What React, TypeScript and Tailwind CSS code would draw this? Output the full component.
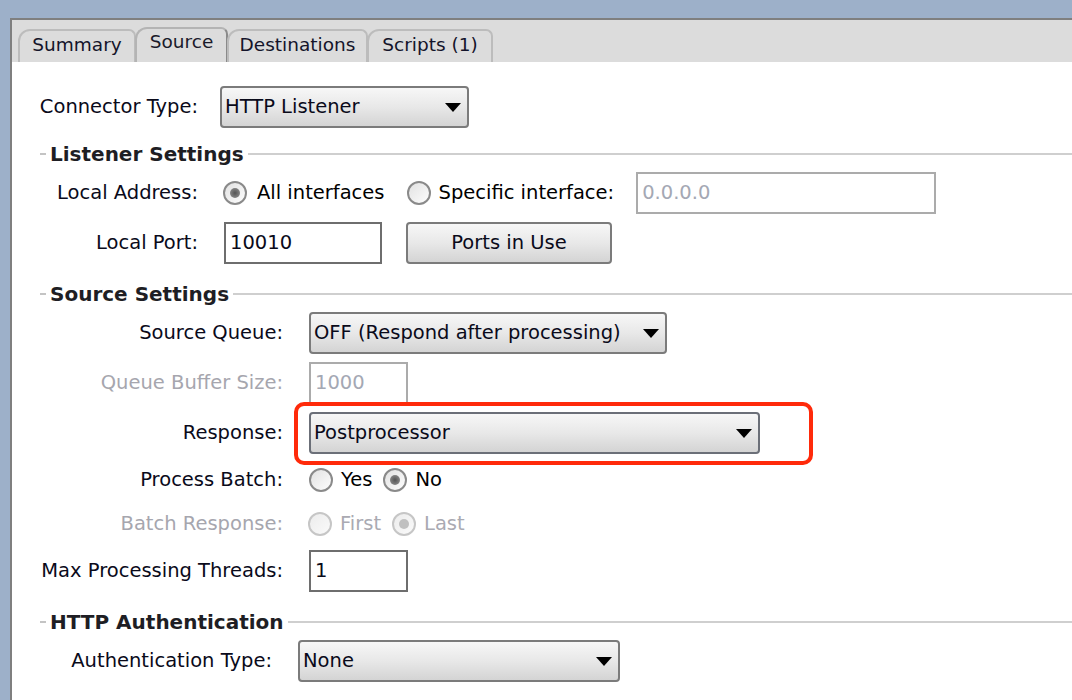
import { ReactNode } from "react";

const FONT = "font-['DejaVu_Sans',Verdana,sans-serif]";

function Arrow() {
  return (
    <svg width="16" height="9" viewBox="0 0 16 9" className="shrink-0">
      <polygon points="0,0 16,0 8,9" fill="#000" />
    </svg>
  );
}

function Dropdown({ value, width, focused }: { value: string; width: string; focused?: boolean }) {
  return (
    <div
      className={`${width} h-[42px] flex items-center justify-between pl-[3px] pr-[6px] rounded-[4px] border-2 bg-linear-to-b from-[#f7f7f7] via-[#e8e8e8] to-[#d4d4d4] ${
        focused ? "border-[#6b6f78]" : "border-[#7b7b7b]"
      }`}
    >
      <span className="text-[#0a0a1a]">{value}</span>
      <Arrow />
    </div>
  );
}

function Radio({ checked, disabled }: { checked?: boolean; disabled?: boolean }) {
  return (
    <div
      className={`w-[24px] h-[24px] rounded-full border-2 flex items-center justify-center bg-linear-to-br ${
        disabled ? "border-[#c6c6c6] from-[#ececec] to-[#fafafa]" : "border-[#8a8a8a] from-[#e2e2e2] to-[#fdfdfd]"
      }`}
    >
      {checked && (
        <div
          className={`w-[10px] h-[10px] rounded-full ${
            disabled ? "bg-[#c0c0c0]" : "bg-radial from-[#555] to-[#9a9a9a]"
          }`}
        />
      )}
    </div>
  );
}

function Field({ value, width, disabled }: { value: string; width: string; disabled?: boolean }) {
  return (
    <div
      className={`${width} h-[42px] flex items-center pl-[4px] border-2 bg-white ${
        disabled ? "border-[#ababab] text-[#a4a8b4]" : "border-[#6e6e6e] text-[#0a0a1a]"
      }`}
    >
      {value}
    </div>
  );
}

function Header({ title, mt }: { title: string; mt: string }) {
  return (
    <div className={`${mt} h-[24px] flex items-center`}>
      <div className="ml-[28px] w-[6px] h-[2px] bg-[#c4c4c4]" />
      <span className="ml-[4px] font-bold text-[20px] leading-none text-[#1e1e24]">{title}</span>
      <div className="ml-[4px] flex-1 h-[2px] bg-[#cfcfcf]" />
    </div>
  );
}

function Row({ label, labelW, gap, mt, h = "h-[42px]", dim, children }: {
  label: string; labelW: string; gap: string; mt: string; h?: string; dim?: boolean; children: ReactNode;
}) {
  return (
    <div className={`${mt} ${h} flex items-center`}>
      <div className={`${labelW} text-right shrink-0 ${dim ? "text-[#a6a6ae]" : "text-[#0a0a1a]"}`}>{label}</div>
      <div className={`${gap} flex items-center`}>{children}</div>
    </div>
  );
}

const TABS = [
  { name: "Summary", w: "w-[118px]", active: false },
  { name: "Source", w: "w-[93px]", active: true },
  { name: "Destinations", w: "w-[141px]", active: false },
  { name: "Scripts (1)", w: "w-[126px]", active: false },
];

export default function App() {
  return (
    <div className={`${FONT} text-[19.5px] leading-none w-[1072px] h-[700px] overflow-hidden bg-[#9db0c9] pt-[18px] pl-[10px]`}>
      <div className="h-full border-t-2 border-l-2 border-[#7f7f7f] flex flex-col">
        {/* Tab strip */}
        <div className="h-[42px] bg-[#dcdcdc] flex items-end pl-[6px]">
          {TABS.map((t) => (
            <div
              key={t.name}
              className={`${t.w} -mr-[1px] flex items-center justify-center rounded-tl-[12px] rounded-tr-[7px] border-t-2 border-l-2 border-r-2 text-[18.5px] ${
                t.active
                  ? "h-[35px] pb-[6px] border-t-[#b4b4b4] border-l-[#b4b4b4] border-r-[#8a8a8a] text-[#1a1a2a]"
                  : "h-[33px] pb-[3px] border-[#bcbcbc] text-[#14142a]"
              }`}
            >
              {t.name}
            </div>
          ))}
        </div>

        {/* Content */}
        <div className="flex-1 bg-white">
          <Row label="Connector Type:" labelW="w-[186px]" gap="ml-[22px]" mt="mt-[24px]">
            <Dropdown value="HTTP Listener" width="w-[249px]" />
          </Row>

          <Header title="Listener Settings" mt="mt-[14px]" />
          <Row label="Local Address:" labelW="w-[186px]" gap="ml-[25px]" mt="mt-[6px]">
            <Radio checked />
            <span className="ml-[10px]">All interfaces</span>
            <div className="ml-[22px]">
              <Radio />
            </div>
            <span className="ml-[8px]">Specific interface:</span>
            <div className="ml-[22px]">
              <Field value="0.0.0.0" width="w-[300px]" disabled />
            </div>
          </Row>
          <Row label="Local Port:" labelW="w-[186px]" gap="ml-[26px]" mt="mt-[8px]">
            <Field value="10010" width="w-[158px]" />
            <div className="ml-[24px] w-[206px] h-[42px] flex items-center justify-center rounded-[4px] border-2 border-[#7b7b7b] bg-linear-to-b from-[#f7f7f7] via-[#e8e8e8] to-[#d4d4d4] text-[#0a0a1a]">
              Ports in Use
            </div>
          </Row>

          <Header title="Source Settings" mt="mt-[18px]" />
          <Row label="Source Queue:" labelW="w-[271px]" gap="ml-[26px]" mt="mt-[6px]">
            <Dropdown value="OFF (Respond after processing)" width="w-[358px]" />
          </Row>
          <Row label="Queue Buffer Size:" labelW="w-[271px]" gap="ml-[26px]" mt="mt-[8px]" dim>
            <Field value="1000" width="w-[99px]" disabled />
          </Row>
          <Row label="Response:" labelW="w-[271px]" gap="ml-[26px]" mt="mt-[8px]">
            <div className="relative">
              <Dropdown value="Postprocessor" width="w-[451px]" focused />
              <div className="absolute -left-[15px] -right-[53px] -top-[10px] -bottom-[11px] border-4 border-[#ff2a0a] rounded-[10px]" />
            </div>
          </Row>
          <Row label="Process Batch:" labelW="w-[271px]" gap="ml-[26px]" mt="mt-[12px]" h="h-[28px]">
            <Radio />
            <span className="ml-[8px]">Yes</span>
            <div className="ml-[11px]">
              <Radio checked />
            </div>
            <span className="ml-[8px]">No</span>
          </Row>
          <Row label="Batch Response:" labelW="w-[271px]" gap="ml-[25px]" mt="mt-[16px]" h="h-[28px]" dim>
            <Radio disabled />
            <span className="ml-[8px] text-[#aaaab2]">First</span>
            <div className="ml-[11px]">
              <Radio checked disabled />
            </div>
            <span className="ml-[8px] text-[#aaaab2]">Last</span>
          </Row>
          <Row label="Max Processing Threads:" labelW="w-[271px]" gap="ml-[26px]" mt="mt-[12px]">
            <Field value="1" width="w-[99px]" />
          </Row>

          <Header title="HTTP Authentication" mt="mt-[18px]" />
          <Row label="Authentication Type:" labelW="w-[260px]" gap="ml-[26px]" mt="mt-[6px]">
            <Dropdown value="None" width="w-[322px]" />
          </Row>
        </div>
      </div>
    </div>
  );
}
